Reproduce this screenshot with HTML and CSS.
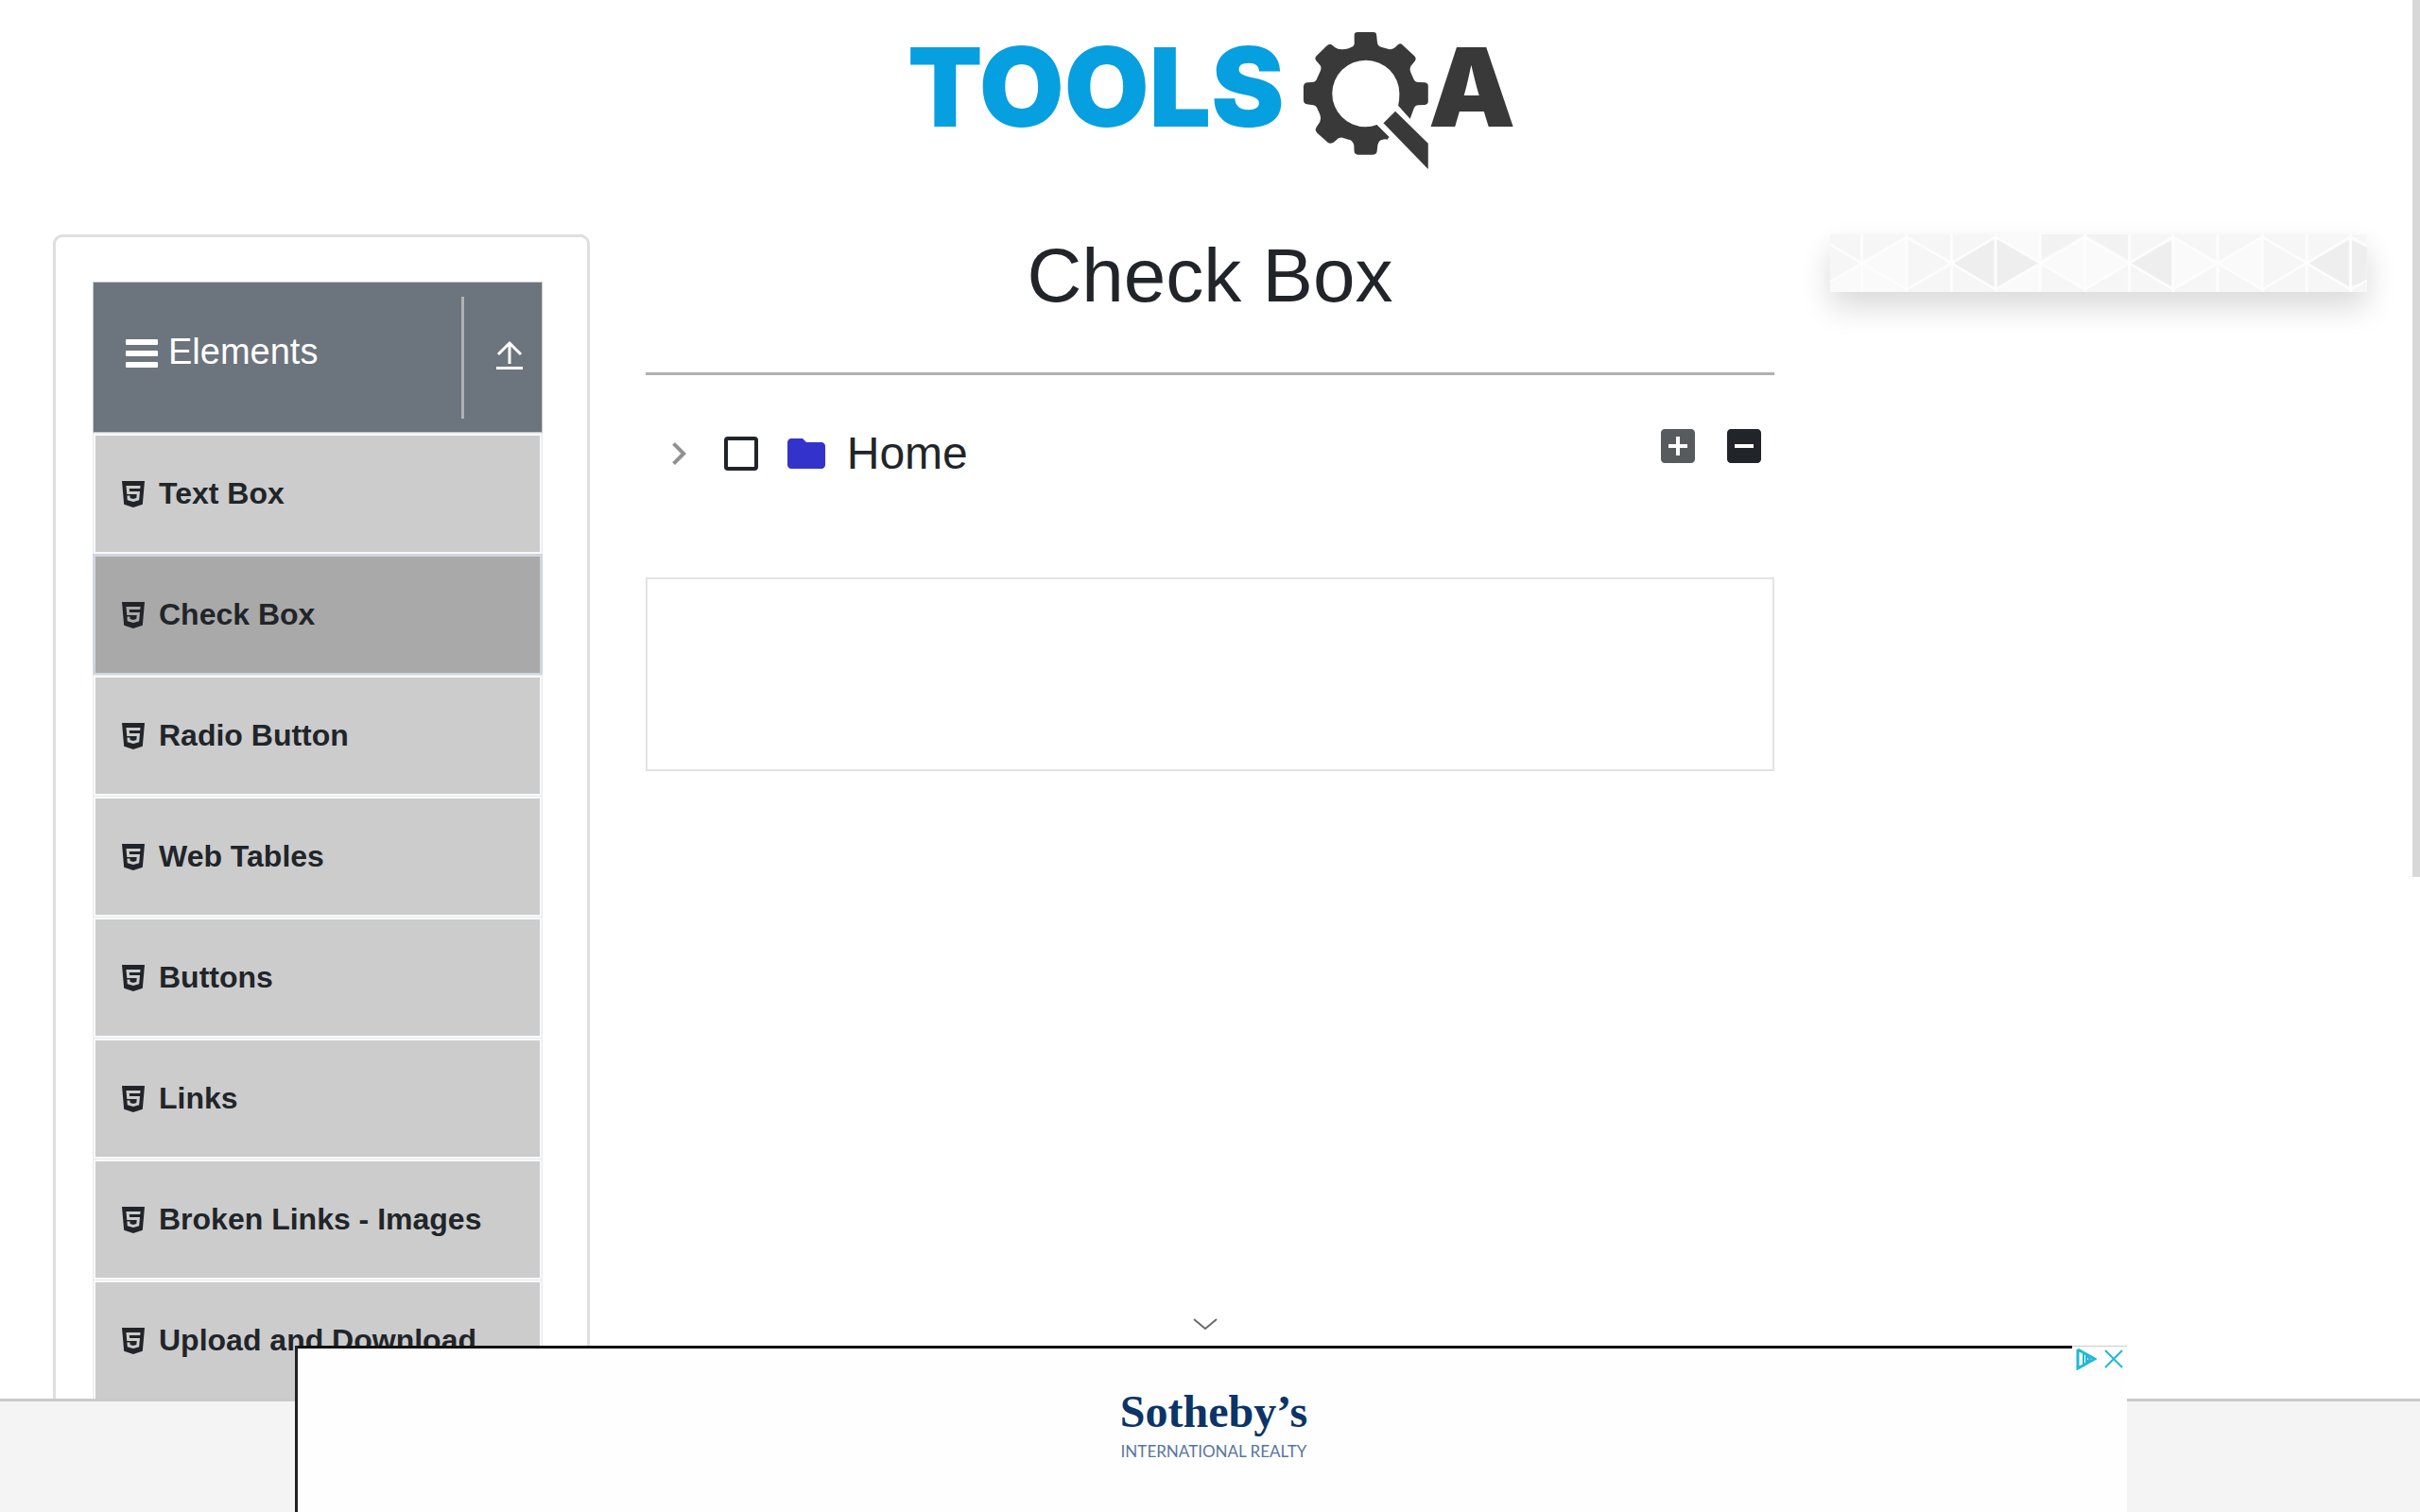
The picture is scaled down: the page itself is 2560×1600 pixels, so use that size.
FILE: index.html
```html
<!DOCTYPE html>
<html lang="en">
<head>
<meta charset="utf-8">
<title>Check Box - ToolsQA</title>
<link rel="stylesheet" href="styles.css">
</head>
<body>
<svg class="sprite">
  <symbol id="html5" viewBox="0 32 384 448"><path d="M0 32l34.9 395.8L191.5 480l157.6-52.2L384 32H0zm308.2 127.9H124.4l4.1 49.4h175.6l-13.6 148.4-97.9 27v.3h-1.1l-98.7-27.3-6-75.8h47.7L138 320l53.5 14.5 53.7-14.5 6-62.2H84.3L71.5 112.2h241.1l-4.4 47.7z"/></symbol>
</svg>
<div class="scroll">
  <header class="site-header">
    <a href="#" aria-label="ToolsQA home">
      <svg class="logo" width="680" height="190" viewBox="0 0 680 190">
        <text class="logo-tools" x="20" y="124">TOOLS</text>
        <text class="logo-a" x="571" y="124">A</text>
        <g class="logo-gear" transform="scale(.4337 .3333)">
          <path d="M1136 110V80Q1136 72 1144 72H1182Q1190 72 1190 80L1192 105Q1193 117 1203 120L1222 127Q1232 127 1240 115Q1247 104 1254 113L1282 147Q1289 155 1283 165L1275 178Q1270 187 1273 198L1281 222Q1284 231 1292 231L1308 232Q1316 234 1316 242V292Q1316 302 1308 303L1292 304Q1284 305 1281 315L1272 347L1243 305Q1246 290 1246 267A82 106 0 1 0 1163 373Q1178 373 1191 366L1221 405L1216 413Q1212 411 1205 413Q1196 414 1193 430L1191 452Q1189 461 1180 461H1146Q1137 460 1136 452L1135 430Q1132 415 1122 413L1107 407Q1098 405 1090 417Q1080 430 1072 423L1046 393Q1038 383 1044 373L1052 357Q1056 345 1052 333L1045 313Q1041 303 1032 303L1020 301Q1012 298 1012 288V245Q1013 233 1021 232L1033 231Q1041 231 1044 222L1052 199Q1057 187 1053 178L1043 163Q1038 155 1044 147L1068 116Q1076 107 1082 113L1089 121Q1097 128 1107 127Q1122 125 1128 120Q1135 117 1136 110Z"/>
          <path d="M1236 323L1316 425V507L1207 361Z"/>
        </g>
      </svg>
    </a>
  </header>
  <div class="columns">
    <nav class="sidebar">
      <div class="group-header">
        <span class="group-title">
          <svg width="34" height="30" viewBox="0 0 34 30"><rect width="34" height="6" rx="1"/><rect y="12" width="34" height="6" rx="1"/><rect y="24" width="34" height="6" rx="1"/></svg>
          Elements
        </span>
        <button class="group-toggle" aria-label="Collapse">
          <svg width="30" height="32" viewBox="0 0 30 32"><path d="M15 25V3M3 15L15 3L27 15" fill="none" stroke="#fff" stroke-width="3"/><path d="M1 28H29V31H1Z"/></svg>
        </button>
      </div>
      <ul class="menu">
        <li><a href="#"><svg><use href="#html5"/></svg>Text Box</a></li>
        <li class="active"><a href="#"><svg><use href="#html5"/></svg>Check Box</a></li>
        <li><a href="#"><svg><use href="#html5"/></svg>Radio Button</a></li>
        <li><a href="#"><svg><use href="#html5"/></svg>Web Tables</a></li>
        <li><a href="#"><svg><use href="#html5"/></svg>Buttons</a></li>
        <li><a href="#"><svg><use href="#html5"/></svg>Links</a></li>
        <li><a href="#"><svg><use href="#html5"/></svg>Broken Links - Images</a></li>
        <li><a href="#"><svg><use href="#html5"/></svg>Upload and Download</a></li>
      </ul>
    </nav>
    <main>
      <h1>Check Box</h1>
      <div class="tree">
        <div class="node">
          <button class="icon-button expand" aria-label="Toggle"><svg viewBox="0 0 24 24"><path d="M10 6L8.59 7.41 13.17 12l-4.58 4.59L10 18l6-6z"/></svg></button>
          <input type="checkbox" id="home">
          <label for="home"><svg viewBox="0 0 24 24"><path d="M10 4H4c-1.1 0-1.99.9-1.99 2L2 18c0 1.1.9 2 2 2h16c1.1 0 2-.9 2-2V8c0-1.1-.9-2-2-2h-8l-2-2z"/></svg>Home</label>
        </div>
        <div class="tree-options">
          <button class="icon-button expand-all" aria-label="Expand all"><svg viewBox="0 0 24 24"><path d="M19 3H5c-1.11 0-2 .9-2 2v14c0 1.1.89 2 2 2h14c1.1 0 2-.9 2-2V5c0-1.1-.9-2-2-2zm-2 10h-4v4h-2v-4H7v-2h4V7h2v4h4v2z"/></svg></button>
          <button class="icon-button" aria-label="Collapse all"><svg viewBox="0 0 24 24"><path d="M19 3H5c-1.1 0-2 .9-2 2v14c0 1.1.9 2 2 2h14c1.1 0 2-.9 2-2V5c0-1.1-.9-2-2-2zm-2 10H7v-2h10v2z"/></svg></button>
        </div>
      </div>
      <div class="result"></div>
    </main>
    <aside>
      <svg class="banner" viewBox="0 0 1349 184" preserveAspectRatio="none">
        <path fill="#f6f6f6" d="M0 0H1349V184H0Z"/>
        <path fill="#fafafa" d="M80 92L192 10V174ZM0 184V160L80 92L192 184ZM416 0H528V92ZM416 184L528 92V184ZM530 92L640 10L752 92L640 174ZM862 10L974 92L862 174ZM974 92L1086 10V174Z"/>
        <path fill="#eee" d="M308 92L416 14L526 92L416 170ZM754 92L860 18V166ZM1200 92L1306 18L1349 40V148L1306 166Z"/>
        <path fill="#f2f2f2" d="M530 0H640L530 80ZM640 0H750V80Z"/>
        <path fill="none" stroke="#fdfdfd" stroke-width="7" d="M80 0V184M192 0V184M305 0V184M416 0V184M528 0V184M640 0V184M752 0V184M862 0V184M974 0V184M1086 0V184M1198 0V184M1308 0V184M0 32L80 92L0 152M80 92L192 8L305 92L416 8L528 92L640 8L752 92L862 8L974 92L1086 8L1198 92L1308 8L1349 38M80 92L192 176L305 92L416 176L528 92L640 176L752 92L862 176L974 92L1086 176L1198 92L1308 176L1349 148"/>
      </svg>
    </aside>
  </div>
</div>
<footer></footer>
<div class="scrollbar"></div>
<section class="ad">
  <button class="ad-collapse" aria-label="Hide ad"><svg width="26" height="12" viewBox="0 0 26 12"><path d="M1 1L13 11L25 1" fill="none" stroke="#6b6b6b" stroke-width="2"/></svg></button>
  <div class="ad-body">
    <a class="ad-brand" href="#"><strong>Sotheby’s</strong><span>INTERNATIONAL REALTY</span></a>
    <div class="ad-choices">
      <svg width="24" height="24" viewBox="0 0 24 24"><path d="M4 2V22L22 12L4 2" stroke-width="3"/><path d="M10 6V18M13 9V15L17 12Z" stroke-width="2"/></svg>
      <svg width="20" height="20" viewBox="0 0 20 20"><path d="M1 1L19 19M19 1L1 19" stroke-width="2"/></svg>
    </div>
  </div>
</section>
</body>
</html>
```

FILE: styles.css
```css
* { box-sizing: border-box; }

body {
  margin: 0;
  height: 100vh;
  display: flex;
  flex-direction: column;
  overflow: hidden;
  background: #fff;
  color: #212529;
  font-family: "Liberation Sans", Arial, sans-serif;
}

a { color: inherit; text-decoration: none; }
button { padding: 0; border: 0; background: none; color: inherit; font: inherit; }
svg { display: block; fill: currentColor; flex: none; }
.sprite { display: none; }

.scroll { flex: 1; min-height: 0; overflow: hidden; }

.site-header { display: flex; justify-content: center; padding: 10px 0 48px; }
.logo text { font-family: Inter, sans-serif; font-size: 116px; font-weight: 900; }
.logo-tools { fill: #069fdf; }
.logo-a { fill: #393939; }
.logo-gear { fill: #393939; }

.columns {
  display: grid;
  grid-template-columns: 568fr 1195fr 568fr;
  gap: 59px;
  align-items: start;
  padding: 0 56px;
}

.sidebar { padding: 47px 47px 48px 39px; border: 3px solid #dfdfdf; border-radius: 10px; }
.group-header {
  display: flex;
  height: 160px;
  padding: 15px 0 14px 34px;
  border: 1px solid #c4c8cb;
  background: #6c757d;
  background-clip: padding-box;
  color: #fff;
}
.group-title {
  flex: 1;
  display: flex;
  align-items: center;
  gap: 11px;
  padding-bottom: 14px;
  font-size: 38px;
  line-height: 38px;
}
.group-title svg { margin-top: 4px; }
.group-toggle {
  display: flex;
  align-items: center;
  justify-content: center;
  width: 85px;
  padding: 0 0 6px 14px;
  border-left: 3px solid #b0b2b4;
}

.menu { margin: 0; padding: 0; list-style: none; }
.menu li { height: 128px; border: 1px solid #e8eaec; border-bottom: 0; }
.menu a {
  display: flex;
  align-items: center;
  gap: 15px;
  height: 100%;
  padding-left: 28px;
  border: 2px solid #f8f9fa;
  background: #ccc;
  font-size: 32px;
  font-weight: 700;
}
.menu svg { width: 24px; height: 28px; }
.menu .active, .menu .active a { border-color: #d0d6dd; }
.menu .active a { background: #a9a9a9; }

h1 {
  margin: 0 0 51px;
  padding-bottom: 58px;
  border-bottom: 3px solid #b0b0b0;
  font-size: 80px;
  font-weight: 400;
  line-height: 88px;
  text-align: center;
}
.tree { display: flex; justify-content: space-between; align-items: flex-start; padding: 0 8px 0 11px; }
.node { display: flex; align-items: center; padding-top: 8px; }
.tree svg { width: 48px; height: 48px; }
.expand { color: #919191; }
.node input {
  appearance: none;
  width: 36px;
  height: 36px;
  margin: 0 27px 0 24px;
  border: 4px solid #212529;
  border-radius: 4px;
}
.node label { display: flex; align-items: center; gap: 19px; font-size: 48px; line-height: 48px; }
.node label svg { color: #33c; }
.tree-options { display: flex; gap: 22px; }
.expand-all { color: #585b5e; }
.result { margin-top: 107px; height: 205px; border: 2px solid #e3e3e3; }

.banner { width: 100%; height: 61px; box-shadow: 0 16px 32px rgba(0, 0, 0, .15); }

footer { flex: none; height: 120px; border-top: 3px solid #cacaca; background: #f4f4f4; }

.scrollbar { position: fixed; top: 0; right: 0; width: 8px; height: 58%; background: #d8d8d8; }

.ad { position: fixed; right: 310px; bottom: 0; left: 312px; }
.ad-collapse { display: block; margin: 0 auto; padding: 0 12px 17px 0; }
.ad-body {
  display: flex;
  justify-content: center;
  height: 176px;
  border-left: 3px solid #222;
  background:
    linear-gradient(#111, #111) 0 0 / calc(100% - 58px) 3px no-repeat,
    linear-gradient(#ccc, #ccc) 0 0 / 100% 1px no-repeat,
    #fefefe;
}
.ad-brand { margin: auto; padding: 0 0 8px 3px; color: #0b3468; text-align: center; }
.ad-brand strong, .ad-brand span { display: block; }
.ad-brand strong { margin-bottom: 4px; font: 700 48px/52px "Liberation Serif", serif; }
.ad-brand span { color: #58779b; font: 400 17px/24px Lato, sans-serif; }
.ad-choices { position: absolute; right: 4px; bottom: 150px; display: flex; align-items: center; gap: 8px; }
.ad-choices svg { fill: none; stroke: #22b8d4; }
```
